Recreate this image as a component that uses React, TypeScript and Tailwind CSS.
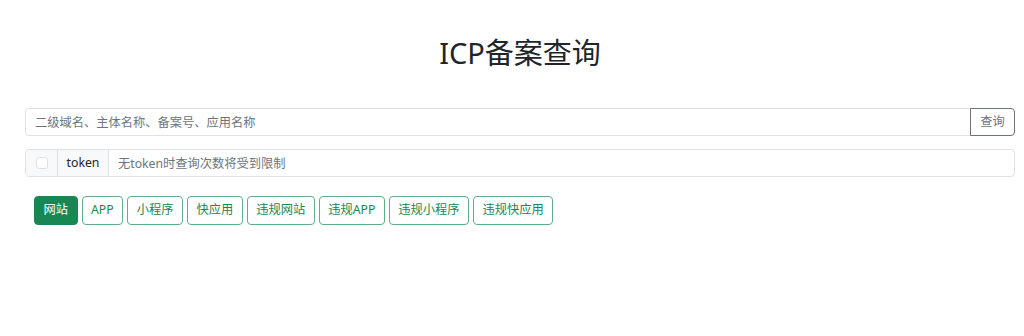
import React from "react";

const tabs = ["网站", "APP", "小程序", "快应用", "违规网站", "违规APP", "违规小程序", "违规快应用"];

export default function App() {
  const font = { fontFamily: '"Noto Sans", "Noto Sans CJK SC", sans-serif' };
  return (
    <div className="w-[1024px] h-[336px] bg-white text-[#212529]" style={font}>
      <div className="pl-[25px] pr-[9px] pt-[36px]">
        <h1 className="text-center text-[29px] leading-[34px] text-[#212529]">ICP备案查询</h1>
        <div className="mt-[38px] flex h-[28px]">
          <input
            className="flex-1 h-full border border-[#dee2e6] rounded-l-[4px] px-[9px] text-[12.25px] text-[#212529] placeholder:text-[#6c757d] outline-none"
            placeholder="二级域名、主体名称、备案号、应用名称"
          />
          <button className="h-full w-[45px] -ml-px border border-[#6c757d] rounded-r-[4px] text-[12.25px] text-[#6c757d] bg-white">
            查询
          </button>
        </div>
        <div className="mt-[13px] flex h-[28px] border border-[#dee2e6] rounded-[4px] overflow-hidden">
          <div className="w-[32px] h-full bg-[#f8f9fa] border-r border-[#dee2e6] flex items-center justify-center">
            <span className="w-[12px] h-[12px] border border-[#dee2e6] rounded-[3px] bg-white" />
          </div>
          <div className="w-[51px] h-full bg-[#f8f9fa] border-r border-[#dee2e6] flex items-center justify-center text-[12.25px] text-[#212529]">
            token
          </div>
          <input
            className="flex-1 h-full px-[9px] text-[12.25px] placeholder:text-[#6c757d] outline-none"
            placeholder="无token时查询次数将受到限制"
          />
        </div>
        <div className="mt-[19px] pl-[9px] flex gap-[4px]">
          {tabs.map((t, i) => (
            <button
              key={t}
              className={
                i === 0
                  ? "h-[29px] px-[8.5px] rounded-[4px] border border-[#198754] bg-[#198754] text-white text-[12.25px]"
                  : "h-[29px] px-[8.5px] rounded-[4px] border border-[#5fae88] bg-white text-[#198754] text-[12.25px]"
              }
            >
              {t}
            </button>
          ))}
        </div>
      </div>
    </div>
  );
}
